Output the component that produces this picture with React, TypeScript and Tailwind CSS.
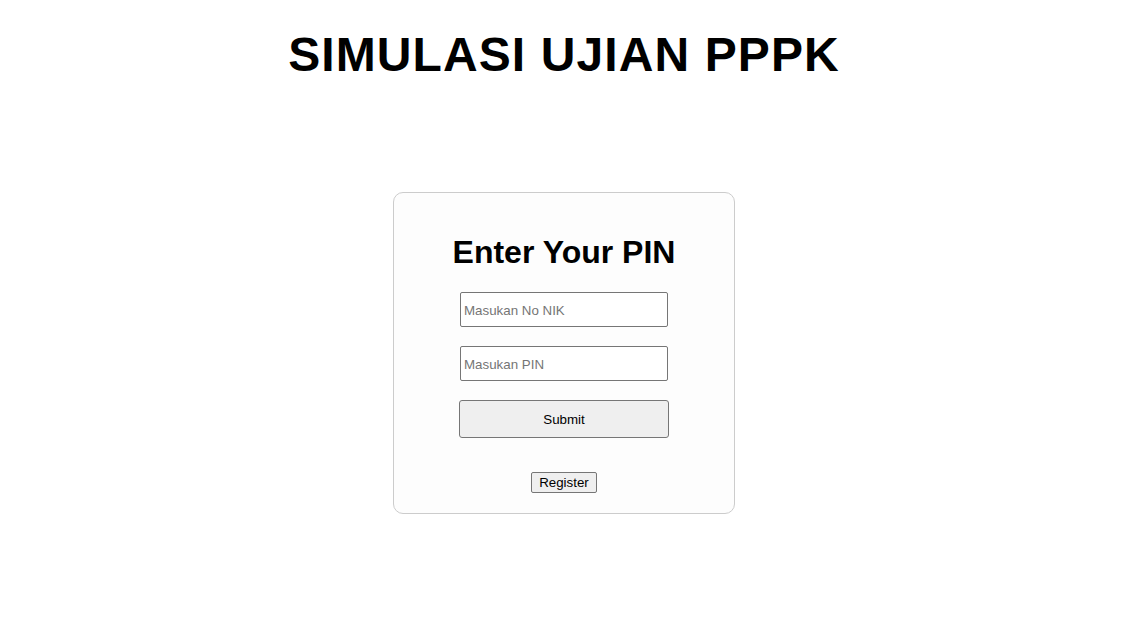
import React from "react";

export default function App() {
  const font = { fontFamily: '"Liberation Sans", Arial, sans-serif' };
  return (
    <div className="min-h-[633px] w-full bg-white flex flex-col items-center text-black" style={font}>
      <h1 className="mt-[27px] text-[48px] leading-[55px] font-bold tracking-[1.1px]">SIMULASI UJIAN PPPK</h1>
      <div className="mt-[110px] w-[342px] border border-[#cccccc] rounded-[10px] bg-[#fdfdfd] flex flex-col items-center pt-[41px] pb-[20px]">
        <h2 className="text-[32px] leading-[37px] font-bold">Enter Your PIN</h2>
        <input
          type="text"
          placeholder="Masukan No NIK"
          className="mt-[21px] w-[208px] h-[35px] border border-[#767676] rounded-[2px] bg-white px-[3px] pt-[1px] text-[13.33px] placeholder:text-[#757575] outline-none"
        />
        <input
          type="password"
          placeholder="Masukan PIN"
          className="mt-[19px] w-[208px] h-[35px] border border-[#767676] rounded-[2px] bg-white px-[3px] pt-[1px] text-[13.33px] placeholder:text-[#757575] outline-none"
        />
        <button className="mt-[19px] w-[210px] h-[38px] border border-[#767676] rounded-[3px] bg-[#efefef] text-[13.33px] pt-[1px] text-black">
          Submit
        </button>
        <button className="mt-[34px] w-[66px] h-[21px] border border-[#767676] rounded-[2px] bg-[#efefef] text-[13.33px] leading-[15px] text-black">
          Register
        </button>
      </div>
    </div>
  );
}
